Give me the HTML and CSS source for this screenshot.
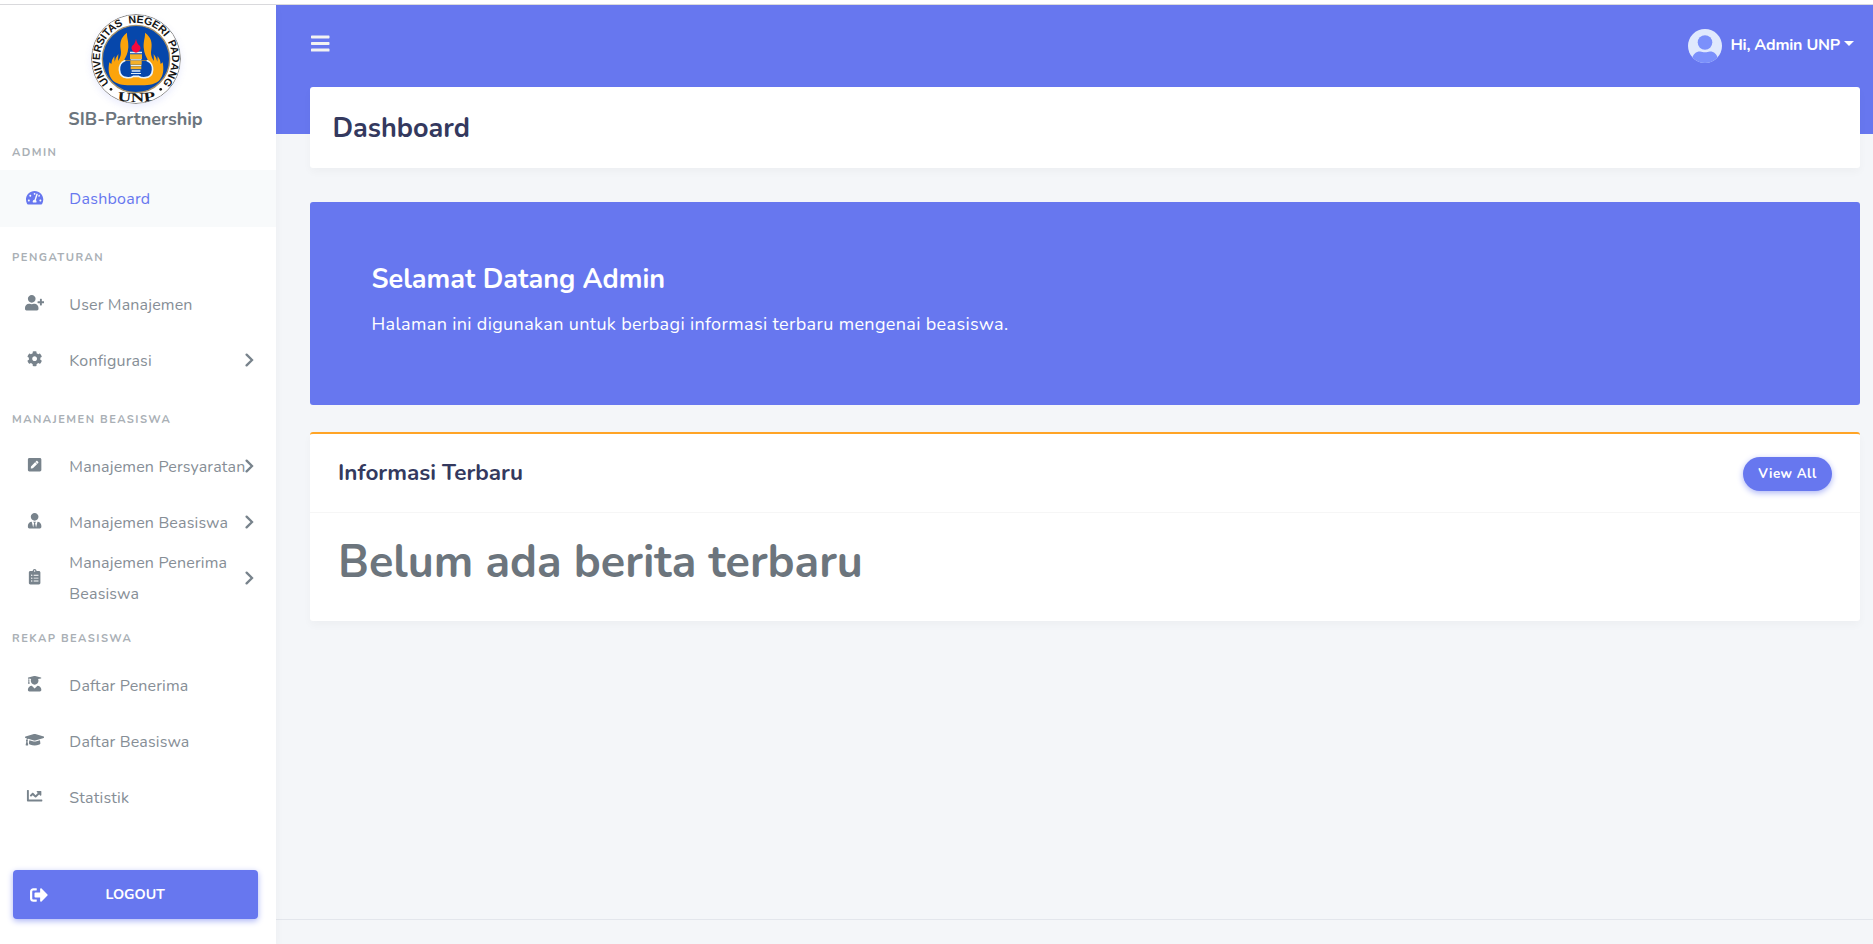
FILE: index.html
```html
<!DOCTYPE html>
<html lang="id">
<head>
<meta charset="utf-8">
<title>Dashboard - SIB-Partnership</title>
<link rel="stylesheet" href="styles.css">
</head>
<body>
<div class="app">
  <aside class="sidebar">
    <div class="brand">
      <svg class="brand-logo" viewBox="273 42 270 270" role="img" aria-label="Universitas Negeri Padang">
        <defs>
          <path id="ring" d="M408 285a108 108 0 1 1 .1 0"/>
          <path id="base" d="M330 297Q408 315 486 297"/>
        </defs>
        <circle cx="408" cy="177" r="133.5" fill="#fff" stroke="#8b8b8b" stroke-width="3"/>
        <circle cx="408" cy="177" r="101" fill="#0647ab" stroke="#a8926a" stroke-width="4"/>
        <path fill="#fba40c" d="M381 98C362 112 359 128 362 148C365 165 360 174 354 183L355 162Q347 172 344 185L343 168Q335 178 334 192L328 187C324 206 325 229 339 242C357 257 382 256 408 256S459 257 477 242C491 229 492 206 488 187L482 192Q481 178 473 168L472 185Q469 172 461 162L462 183C456 174 451 165 454 148C457 128 454 112 435 98C436 112 430 122 431 142C432 160 439 172 444 181H372C377 172 384 160 385 142C386 122 380 112 381 98Z"/>
        <path fill="#0647ab" stroke="#e9f3f8" stroke-width="5" stroke-linecap="round" d="M374 182C352 190 352 231 380 233Q393 234 400 229H416Q423 234 436 233C464 231 464 190 442 182"/>
        <path fill="#f3b02a" d="M390 163h36v15h-36zM391 182h34v12h-34zM392 199h32v9h-32z"/>
        <path fill="#dff0fb" d="M390 155h36v5h-36zM392 178h32v3h-32zM392 195h32v3h-32zM395 211h26v4h-26zM393 219h30v3h-30z"/>
        <path fill="#f5083c" d="M408 116Q411 132 418 136A13 13 0 1 1 398 136Q405 132 408 116Z"/>
        <g fill="#161616">
          <text class="seal-ring"><textPath href="#ring" startOffset="91" textLength="498">UNIVERSITAS&#160; NEGERI&#160; PADANG</textPath></text>
          <text class="seal-base"><textPath href="#base" startOffset="22" textLength="116" lengthAdjust="spacingAndGlyphs">UNP</textPath></text>
          <circle cx="333" cy="268" r="4"/><circle cx="482" cy="268" r="4"/>
        </g>
      </svg>
      <div class="brand-name">SIB-Partnership</div>
    </div>

    <nav class="menu">
      <div class="menu-header first">ADMIN</div>
      <a class="item active"><svg viewBox="-32 0 640 512"><path d="M288 32C128.94 32 0 160.94 0 320c0 52.8 14.25 102.26 39.06 144.8 5.61 9.62 16.3 15.2 27.44 15.2h443c11.14 0 21.83-5.58 27.44-15.2C561.75 422.26 576 372.8 576 320c0-159.06-128.94-288-288-288zm0 64c14.71 0 26.58 10.13 30.32 23.65-1.11 2.26-2.64 4.23-3.45 6.67l-9.22 27.67c-5.13 3.49-10.97 6.01-17.64 6.01-17.67 0-32-14.33-32-32S270.33 96 288 96zM96 384c-17.67 0-32-14.33-32-32s14.33-32 32-32 32 14.33 32 32-14.33 32-32 32zm48-160c-17.67 0-32-14.33-32-32s14.33-32 32-32 32 14.33 32 32-14.33 32-32 32zm246.77-72.41l-61.33 184C343.13 347.33 352 364.54 352 384c0 11.72-3.38 22.55-8.88 32H232.88c-5.5-9.45-8.88-20.28-8.88-32 0-33.94 26.5-61.43 59.9-63.59l61.34-184.01c4.17-12.56 17.73-19.45 30.36-15.17 12.57 4.19 19.35 17.79 15.17 30.36zm14.66 57.2l15.52-46.55c3.47-1.29 7.13-2.23 11.05-2.23 17.67 0 32 14.33 32 32s-14.33 32-32 32c-11.38-.01-20.89-6.28-26.57-15.22zM480 384c-17.67 0-32-14.33-32-32s14.33-32 32-32 32 14.33 32 32-14.33 32-32 32z"/></svg><span>Dashboard</span></a>

      <div class="menu-header">PENGATURAN</div>
      <a class="item"><svg viewBox="0 0 640 512"><path d="M624 208h-64v-64c0-8.8-7.2-16-16-16h-32c-8.8 0-16 7.2-16 16v64h-64c-8.8 0-16 7.2-16 16v32c0 8.8 7.2 16 16 16h64v64c0 8.8 7.2 16 16 16h32c8.8 0 16-7.2 16-16v-64h64c8.8 0 16-7.2 16-16v-32c0-8.8-7.2-16-16-16zm-400 48c70.7 0 128-57.3 128-128S294.7 0 224 0 96 57.3 96 128s57.3 128 128 128zm89.6 32h-16.7c-22.2 10.2-46.9 16-72.9 16s-50.6-5.8-72.9-16h-16.7C60.2 288 0 348.2 0 422.4V464c0 26.5 21.5 48 48 48h352c26.5 0 48-21.5 48-48v-41.6c0-74.2-60.2-134.4-134.4-134.4z"/></svg><span>User Manajemen</span></a>
      <a class="item sub"><svg viewBox="-64 0 640 512"><path d="M487.4 315.7l-42.6-24.6c4.3-23.2 4.3-47 0-70.2l42.6-24.6c4.9-2.8 7.1-8.6 5.5-14-11.1-35.6-30-67.8-54.7-94.6-3.8-4.1-10-5.1-14.8-2.3L380.8 110c-17.9-15.4-38.5-27.3-60.8-35.1V25.8c0-5.6-3.9-10.5-9.4-11.7-36.7-8.2-74.3-7.8-109.2 0-5.5 1.2-9.4 6.1-9.4 11.7V75c-22.2 7.9-42.8 19.8-60.8 35.1L88.7 85.5c-4.9-2.8-11-1.9-14.8 2.3-24.7 26.7-43.6 58.9-54.7 94.6-1.7 5.4.6 11.2 5.5 14L67.3 221c-4.3 23.2-4.3 47 0 70.2l-42.6 24.6c-4.9 2.8-7.1 8.6-5.5 14 11.1 35.6 30 67.8 54.7 94.6 3.8 4.1 10 5.1 14.8 2.3l42.6-24.6c17.9 15.4 38.5 27.3 60.8 35.1v49.2c0 5.6 3.9 10.5 9.4 11.7 36.7 8.2 74.3 7.8 109.2 0 5.5-1.2 9.4-6.1 9.4-11.7v-49.2c22.2-7.9 42.8-19.8 60.8-35.1l42.6 24.6c4.9 2.8 11 1.9 14.8-2.3 24.7-26.7 43.6-58.9 54.7-94.6 1.5-5.5-.7-11.3-5.6-14.1zM256 336c-44.1 0-80-35.9-80-80s35.9-80 80-80 80 35.9 80 80-35.9 80-80 80z"/></svg><span>Konfigurasi</span><svg class="chevron" viewBox="0 0 9 14"><path d="M1.6 1.6 7 7 1.6 12.4"/></svg></a>

      <div class="menu-header tall">MANAJEMEN BEASISWA</div>
      <a class="item sub"><svg viewBox="-96 0 640 512"><path d="M400 480H48c-26.5 0-48-21.5-48-48V80c0-26.5 21.5-48 48-48h352c26.5 0 48 21.5 48 48v352c0 26.5-21.5 48-48 48zM238.1 177.9L102.4 313.6l-6.3 57.1c-.8 7.6 5.6 14.1 13.3 13.3l57.1-6.3L302.2 242c2.3-2.3 2.3-6.1 0-8.5L246.7 178c-2.5-2.4-6.3-2.4-8.6-.1zM345 165.1L314.9 135c-9.4-9.4-24.6-9.4-33.9 0l-23.1 23.1c-2.3 2.3-2.3 6.1 0 8.5l55.5 55.5c2.3 2.3 6.1 2.3 8.5 0L345 199c9.3-9.3 9.3-24.5 0-33.9z"/></svg><span>Manajemen Persyaratan</span><svg class="chevron" viewBox="0 0 9 14"><path d="M1.6 1.6 7 7 1.6 12.4"/></svg></a>
      <a class="item sub"><svg viewBox="-96 0 640 512"><path d="M224 256c70.7 0 128-57.3 128-128S294.7 0 224 0 96 57.3 96 128s57.3 128 128 128zm95.8 32.6L272 480l-32-136 32-56h-96l32 56-32 136-47.8-191.4C56.9 292 0 350.3 0 422.4V464c0 26.5 21.5 48 48 48h352c26.5 0 48-21.5 48-48v-41.6c0-72.1-56.9-130.4-128.2-133.8z"/></svg><span>Manajemen Beasiswa</span><svg class="chevron" viewBox="0 0 9 14"><path d="M1.6 1.6 7 7 1.6 12.4"/></svg></a>
      <a class="item sub"><svg viewBox="-128 0 640 512"><path d="M336 64h-80c0-35.3-28.7-64-64-64s-64 28.7-64 64H48C21.5 64 0 85.5 0 112v352c0 26.5 21.5 48 48 48h288c26.5 0 48-21.5 48-48V112c0-26.5-21.5-48-48-48zM96 424c-13.3 0-24-10.7-24-24s10.7-24 24-24 24 10.7 24 24-10.7 24-24 24zm0-96c-13.3 0-24-10.7-24-24s10.7-24 24-24 24 10.7 24 24-10.7 24-24 24zm0-96c-13.3 0-24-10.7-24-24s10.7-24 24-24 24 10.7 24 24-10.7 24-24 24zm96-192c13.3 0 24 10.7 24 24s-10.7 24-24 24-24-10.7-24-24 10.7-24 24-24zm128 368c0 4.4-3.6 8-8 8H168c-4.4 0-8-3.6-8-8v-16c0-4.4 3.6-8 8-8h144c4.4 0 8 3.6 8 8v16zm0-96c0 4.4-3.6 8-8 8H168c-4.4 0-8-3.6-8-8v-16c0-4.4 3.6-8 8-8h144c4.4 0 8 3.6 8 8v16zm0-96c0 4.4-3.6 8-8 8H168c-4.4 0-8-3.6-8-8v-16c0-4.4 3.6-8 8-8h144c4.4 0 8 3.6 8 8v16z"/></svg><span>Manajemen Penerima Beasiswa</span><svg class="chevron" viewBox="0 0 9 14"><path d="M1.6 1.6 7 7 1.6 12.4"/></svg></a>

      <div class="menu-header tall low">REKAP BEASISWA</div>
      <a class="item"><svg viewBox="-96 0 640 512"><path d="M319.4 320.6L224 416l-95.4-95.4C57.1 323.7 0 382.2 0 454.4v9.6c0 26.5 21.5 48 48 48h352c26.5 0 48-21.5 48-48v-9.6c0-72.2-57.1-130.7-128.6-133.8zM13.6 79.8l6.4 1.5v58.4c-7 4.2-12 11.5-12 20.3 0 8.4 4.6 15.4 11.1 19.7L3.5 242c-1.7 6.9 2.1 14 7.6 14h41.8c5.5 0 9.3-7.1 7.6-14l-15.6-62.3C51.4 175.4 56 168.4 56 160c0-8.8-5-16.1-12-20.3V87.1l66 15.9c-8.6 17.2-14 36.4-14 57 0 70.7 57.3 128 128 128s128-57.3 128-128c0-20.6-5.3-39.8-14-57l96.3-23.2c18.2-4.4 18.2-27.1 0-31.5l-190.4-46c-13-3.1-26.7-3.1-39.7 0L13.6 48.2c-18.1 4.4-18.1 27.2 0 31.6z"/></svg><span>Daftar Penerima</span></a>
      <a class="item"><svg viewBox="0 0 640 512"><path d="M622.34 153.2L343.4 67.5c-15.2-4.67-31.6-4.67-46.79 0L17.66 153.2c-23.54 7.23-23.54 38.36 0 45.59l48.63 14.94c-10.67 13.19-17.23 29.28-17.88 46.9C38.78 266.15 32 276.11 32 288c0 10.78 5.68 19.85 13.86 25.65L20.33 428.53C18.11 438.52 25.71 448 35.94 448h56.11c10.24 0 17.84-9.48 15.62-19.47L82.14 313.65C90.32 307.85 96 298.78 96 288c0-11.57-6.47-21.25-15.66-26.87.76-15.02 8.44-28.3 20.69-36.72L296.6 284.5c9.06 2.78 26.44 6.25 46.79 0l278.95-85.7c23.55-7.24 23.55-38.36 0-45.6zM352.79 315.09c-28.53 8.76-52.84 3.92-65.59 0l-145.02-44.55L128 384c0 35.35 85.96 64 192 64s192-28.65 192-64l-14.18-113.47-145.03 44.56z"/></svg><span>Daftar Beasiswa</span></a>
      <a class="item"><svg viewBox="-64 0 640 512"><path d="M496 384H64V80c0-8.84-7.16-16-16-16H16C7.16 64 0 71.16 0 80v336c0 17.67 14.33 32 32 32h464c8.84 0 16-7.16 16-16v-32c0-8.84-7.16-16-16-16zM464 96H345.94c-21.38 0-32.09 25.85-16.97 40.97l32.4 32.4L288 242.75l-73.37-73.37c-12.5-12.5-32.76-12.5-45.25 0l-68.69 68.69c-6.25 6.25-6.25 16.38 0 22.63l22.62 22.62c6.25 6.25 16.38 6.25 22.63 0L192 237.25l73.37 73.37c12.5 12.5 32.76 12.5 45.25 0l96-96 32.4 32.4c15.12 15.12 40.97 4.41 40.97-16.97V112c.01-8.84-7.15-16-15.99-16z"/></svg><span>Statistik</span></a>
    </nav>

    <button class="logout"><svg viewBox="0 0 512 512"><path d="M497 273L329 441c-15 15-41 4.5-41-17v-96H152c-13.3 0-24-10.7-24-24v-96c0-13.3 10.7-24 24-24h136V88c0-21.4 25.9-32 41-17l168 168c9.3 9.4 9.3 24.6 0 34zM192 436v-40c0-6.6-5.4-12-12-12H96c-17.7 0-32-14.3-32-32V160c0-17.7 14.3-32 32-32h84c6.6 0 12-5.4 12-12V76c0-6.6-5.4-12-12-12H96c-53 0-96 43-96 96v192c0 53 43 96 96 96h84c6.6 0 12-5.4 12-12z"/></svg><span>LOGOUT</span></button>
  </aside>

  <div class="main">
    <header class="navbar">
      <svg class="bars" viewBox="0 0 448 392"><path d="M16 72h416c8.8 0 16-7.2 16-16V16c0-8.8-7.2-16-16-16H16C7.2 0 0 7.2 0 16v40c0 8.8 7.2 16 16 16zm0 160h416c8.8 0 16-7.2 16-16v-40c0-8.8-7.2-16-16-16H16c-8.8 0-16 7.2-16 16v40c0 8.8 7.2 16 16 16zm0 160h416c8.8 0 16-7.2 16-16v-40c0-8.8-7.2-16-16-16H16c-8.8 0-16 7.2-16 16v40c0 8.8 7.2 16 16 16z"/></svg>
      <div class="user">
        <svg class="avatar" viewBox="0 0 34 34"><defs><clipPath id="disc"><circle cx="17" cy="17" r="17"/></clipPath></defs><g clip-path="url(#disc)"><path fill="#e0e9fd" d="M0 0h34v34H0z"/><circle cx="17" cy="13.5" r="7.3" fill="#7b90fb"/><path fill="#7b90fb" d="M4 34v-4c1-5 4-7.6 8-7.6 2 0 3 .8 5 .8s3-.8 5-.8c4 0 7 2.6 8 7.6v4z"/></g></svg>
        <span>Hi, Admin UNP</span><i class="caret"></i>
      </div>
    </header>

    <main class="content">
      <section class="page-title"><h1>Dashboard</h1></section>
      <section class="hero">
        <h2>Selamat Datang Admin</h2>
        <p>Halaman ini digunakan untuk berbagi informasi terbaru mengenai beasiswa.</p>
      </section>
      <section class="card">
        <div class="card-header"><h4>Informasi Terbaru</h4><a class="view-all">View All</a></div>
        <div class="card-body"><h1>Belum ada berita terbaru</h1></div>
      </section>
    </main>
    <footer class="footer"></footer>
  </div>
</div>
</body>
</html>
```
FILE: styles.css
```css
* { box-sizing: border-box; }
body {
  margin: 0;
  background: #fff;
  font-family: Nunito, "Open Sans", sans-serif;
  font-size: 16px;
  color: #6c757d;
}
h1, h2, h4, p { margin: 0; }

.app {
  display: flex;
  height: 940px;
  margin-top: 4px;
  border-top: 1px solid #d9d9dc;
  overflow: hidden;
}

/* Sidebar */
.sidebar {
  width: 276px;
  flex: none;
  display: flex;
  flex-direction: column;
  background: #fff;
  box-shadow: 0 4px 9px rgba(0, 0, 0, .04);
  z-index: 1;
}
.brand {
  height: 129px;
  padding: 9px 5px 0 0;
  display: flex;
  flex-direction: column;
  align-items: center;
}
.brand-logo {
  width: 90px;
  height: 90px;
  border-radius: 50%;
  box-shadow: 0 3px 7px rgba(103, 119, 239, .13);
}
.brand-name { font-size: 18px; font-weight: 700; line-height: 30px; }
.seal-ring { font: bold 32px "Liberation Sans", sans-serif; }
.seal-base { font: bold 40px "Liberation Serif", serif; }

.menu-header {
  height: 48px;
  padding: 22.5px 12px 0;
  font-size: 11.2px;
  line-height: 15px;
  font-weight: 700;
  letter-spacing: 1.46px;
  color: #a9afb5;
}
.menu-header.first { height: 36px; padding-top: 10.5px; }
.menu-header.tall { height: 50px; padding-top: 24.5px; }
.menu-header.low { height: 51px; padding-top: 25.5px; }
.item {
  display: flex;
  align-items: center;
  height: 56px;
  padding: 0 22px 0 24.5px;
  letter-spacing: .16px;
  color: #868e96;
}
.item svg { width: 19.25px; height: 15.4px; flex: none; fill: #78838c; }
.item span { width: 178px; margin-left: 25.6px; padding-top: 4.4px; line-height: 31px; flex: none; }
.item .chevron {
  width: 9px;
  height: 14px;
  margin: 1px 0 0 -2.6px;
  fill: none;
  stroke: #78838c;
  stroke-width: 2.3;
  stroke-linecap: round;
}
.item.active { height: 57px; background: #f8fafb; color: #6777ef; }
.item.active svg { margin-bottom: 2px; fill: #6777ef; }
.item.active span { padding-top: 2px; letter-spacing: .25px; }

.logout {
  display: flex;
  align-items: center;
  width: 245px;
  height: 49px;
  margin: 46px 0 0 13px;
  padding: 0 17px;
  border: 0;
  border-radius: 4px;
  background: #6777ef;
  box-shadow: 0 2px 6px #acb5f6;
  color: #fff;
  font: 700 14.2px Nunito, sans-serif;
}
.logout svg { width: 18px; height: 18px; fill: #fff; }
.logout span { margin-left: 57.5px; }

/* Main column */
.main {
  flex: 1;
  display: flex;
  flex-direction: column;
  background: linear-gradient(#6777ef 129px, #f4f6f9 129px);
}
.navbar {
  height: 82px;
  padding: 0 19px 0 35px;
  display: flex;
  justify-content: space-between;
  align-items: flex-start;
}
.bars { width: 18.5px; height: 17px; margin-top: 30px; fill: #f2f2f2; }
.user {
  display: flex;
  align-items: center;
  height: 34px;
  margin-top: 24px;
  color: #fff;
  font-weight: 700;
}
.avatar { width: 34px; height: 34px; margin-right: 8px; }
.user span { line-height: 30px; padding-bottom: 2px; letter-spacing: -.2px; }
.caret {
  margin: 0 0 6px 4px;
  border: 5px solid transparent;
  border-top-color: #fff;
  border-bottom: 0;
}
.content { padding: 0 13px 0 34px; flex: 1; }
.page-title {
  height: 81px;
  padding: 2px 0 0 22.5px;
  display: flex;
  align-items: center;
  background: #fff;
  border-radius: 3px;
  box-shadow: 0 4px 9px rgba(0, 0, 0, .03);
}
.page-title h1 { font-size: 27px; font-weight: 660; color: #34395e; }
.hero {
  height: 203px;
  margin-top: 34px;
  padding: 60px 61.5px;
  background: #6777ef;
  border-radius: 3px;
  color: #fff;
}
.hero h2 { font-size: 27px; line-height: 36px; font-weight: 700; }
.hero p { margin-top: 11px; font-size: 18px; line-height: 31px; letter-spacing: .35px; }
.card {
  height: 189px;
  margin-top: 27px;
  background: #fff;
  border-top: 2px solid #ffa426;
  border-radius: 3px;
  box-shadow: 0 4px 9px rgba(0, 0, 0, .03);
}
.card-header {
  height: 79px;
  padding: 0 28px;
  display: flex;
  align-items: center;
  justify-content: space-between;
  border-bottom: 1px solid #f6f6f6;
}
.card-header h4 { font-size: 22.5px; line-height: 30px; font-weight: 660; color: #34395e; }
.view-all {
  width: 89px;
  height: 34px;
  margin-top: 2px;
  border-radius: 17px;
  background: #6777ef;
  box-shadow: 0 2px 6px #acb5f6;
  color: #fff;
  font-size: 13.4px;
  font-weight: 700;
  line-height: 34px;
  letter-spacing: .5px;
  text-align: center;
}
.card-body { padding: 20px 28px; }
.card-body h1 { font-size: 45px; line-height: 60px; font-weight: 690; }
.footer { height: 25px; border-top: 1px solid #e3e6ec; }
```
